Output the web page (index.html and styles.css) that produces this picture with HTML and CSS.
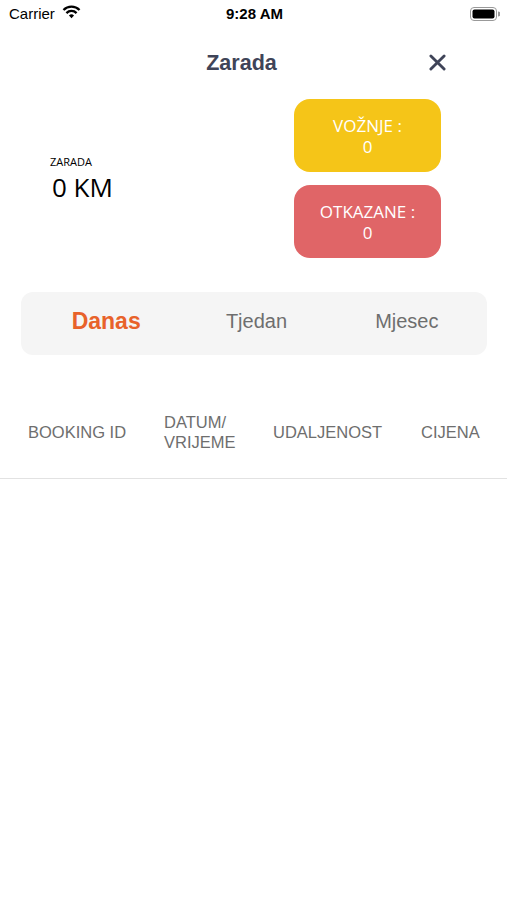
FILE: index.html
```html
<!DOCTYPE html>
<html lang="hr">
<head>
    <meta charset="UTF-8">
    <meta name="viewport" content="width=device-width, initial-scale=1.0">
    <title>Zarada</title>
    <link rel="stylesheet" href="styles.css">
</head>
<body>
<div id="app">
    <div class="status-bar">
        <div class="status-left">
            <span>Carrier</span>
            <svg class="wifi" width="19" height="14" viewBox="0 0 18 13">
                <path d="M9 12.5 L6.6 9.9 A3.4 3.4 0 0 1 11.4 9.9 Z" fill="#000"/>
                <path d="M4.2 7.5 A6.8 6.8 0 0 1 13.8 7.5" stroke="#000" stroke-width="2.2" fill="none"/>
                <path d="M1.4 4.6 A10.8 10.8 0 0 1 16.6 4.6" stroke="#000" stroke-width="2.2" fill="none"/>
            </svg>
        </div>
        <div class="status-time">9:28 AM</div>
        <div class="status-right">
            <svg width="30" height="14" viewBox="0 0 30 14">
                <rect x="0.5" y="0.5" width="26" height="13" rx="3.5" fill="none" stroke="#999" stroke-width="1"/>
                <rect x="2.5" y="2.5" width="22" height="9" rx="2" fill="#000"/>
                <path d="M28 4.5 A2 2 0 0 1 28 9.5 Z" fill="#999"/>
            </svg>
        </div>
    </div>

    <div class="header">
        <h1>Zarada</h1>
        <button class="close" aria-label="Zatvori">
            <svg width="17" height="17" viewBox="0 0 18 18">
                <path d="M2 2 L16 16 M16 2 L2 16" stroke="#3f4458" stroke-width="3" stroke-linecap="round"/>
            </svg>
        </button>
    </div>

    <div class="stats">
        <div class="earnings">
            <div class="earnings-label">ZARADA</div>
            <div class="earnings-value">0 KM</div>
        </div>
        <div class="counters">
            <div class="counter yellow">VOŽNJE :<br>0</div>
            <div class="counter red">OTKAZANE :<br>0</div>
        </div>
    </div>

    <div class="tabs">
        <div class="tab active">Danas</div>
        <div class="tab">Tjedan</div>
        <div class="tab">Mjesec</div>
    </div>

    <div class="table-head">
        <div class="col col-id">BOOKING ID</div>
        <div class="col col-date">DATUM/<br>VRIJEME</div>
        <div class="col col-dist">UDALJENOST</div>
        <div class="col col-price">CIJENA</div>
    </div>
</div>
</body>
</html>
```

FILE: styles.css
```css
:root {
    --title-color: #3f4458;
    --yellow: #f5c518;
    --red: #e06567;
    --orange: #e8622a;
    --gray-text: #6e6e6e;
    --tab-bg: #f5f5f5;
}

body {
    margin: 0;
    background: #fff;
    font-family: "Liberation Sans", Arial, sans-serif;
}

#app {
    width: 507px;
    height: 900px;
    display: flex;
    flex-direction: column;
}

.status-bar {
    height: 27px;
    display: flex;
    align-items: center;
    justify-content: space-between;
    padding: 0 7px 0 9px;
    font-size: 15px;
    color: #000;
}

.status-left {
    width: 120px;
    display: flex;
    align-items: center;
    gap: 7px;
}

.status-left .wifi {
    margin-top: -3px;
}

.status-time {
    font-weight: bold;
}

.status-right {
    width: 120px;
    display: flex;
    justify-content: flex-end;
}

.header {
    height: 69px;
    display: flex;
    align-items: center;
    justify-content: center;
    position: relative;
}

.header h1 {
    margin: 4px 0 0 0;
    font-size: 21.5px;
    font-weight: bold;
    color: var(--title-color);
    padding-right: 24px;
}

.close {
    position: absolute;
    right: 61px;
    top: 27px;
    border: none;
    background: none;
    padding: 0;
    cursor: pointer;
    display: flex;
}

.stats {
    display: flex;
    justify-content: space-between;
    align-items: center;
    padding: 3px 66px 0 50px;
}

.earnings {
    font-family: "Open Sans", sans-serif;
    color: #000;
    margin-top: -2px;
}

.earnings-label {
    font-size: 11px;
    line-height: 14px;
}

.earnings-value {
    font-size: 26px;
    line-height: 28px;
    margin: 4px 0 0 2px;
}

.counters {
    display: flex;
    flex-direction: column;
    gap: 13px;
}

.counter {
    width: 147px;
    height: 73px;
    border-radius: 16px;
    color: #fff;
    font-family: "Open Sans", sans-serif;
    font-size: 17px;
    line-height: 21px;
    text-align: center;
    display: flex;
    align-items: center;
    justify-content: center;
    padding-top: 1px;
    box-sizing: border-box;
}

.counter.yellow {
    background: var(--yellow);
}

.counter.red {
    background: var(--red);
}

.tabs {
    margin: 34px 20px 0 21px;
    height: 63px;
    padding: 0 5px 4px 10px;
    box-sizing: border-box;
    background: var(--tab-bg);
    border-radius: 12px;
    display: flex;
    align-items: center;
}

.tab {
    flex: 1;
    text-align: center;
    font-size: 20px;
    color: var(--gray-text);
}

.tab.active {
    color: var(--orange);
    font-weight: bold;
    font-size: 23px;
}

.table-head {
    margin-top: 38px;
    height: 78px;
    padding: 0 0 7px 28px;
    border-bottom: 1px solid #e2e2e2;
    display: flex;
    align-items: center;
    font-size: 16.5px;
    line-height: 20px;
    color: var(--gray-text);
}

.col-id {
    width: 136px;
}

.col-date {
    width: 109px;
}

.col-dist {
    width: 148px;
}
```
